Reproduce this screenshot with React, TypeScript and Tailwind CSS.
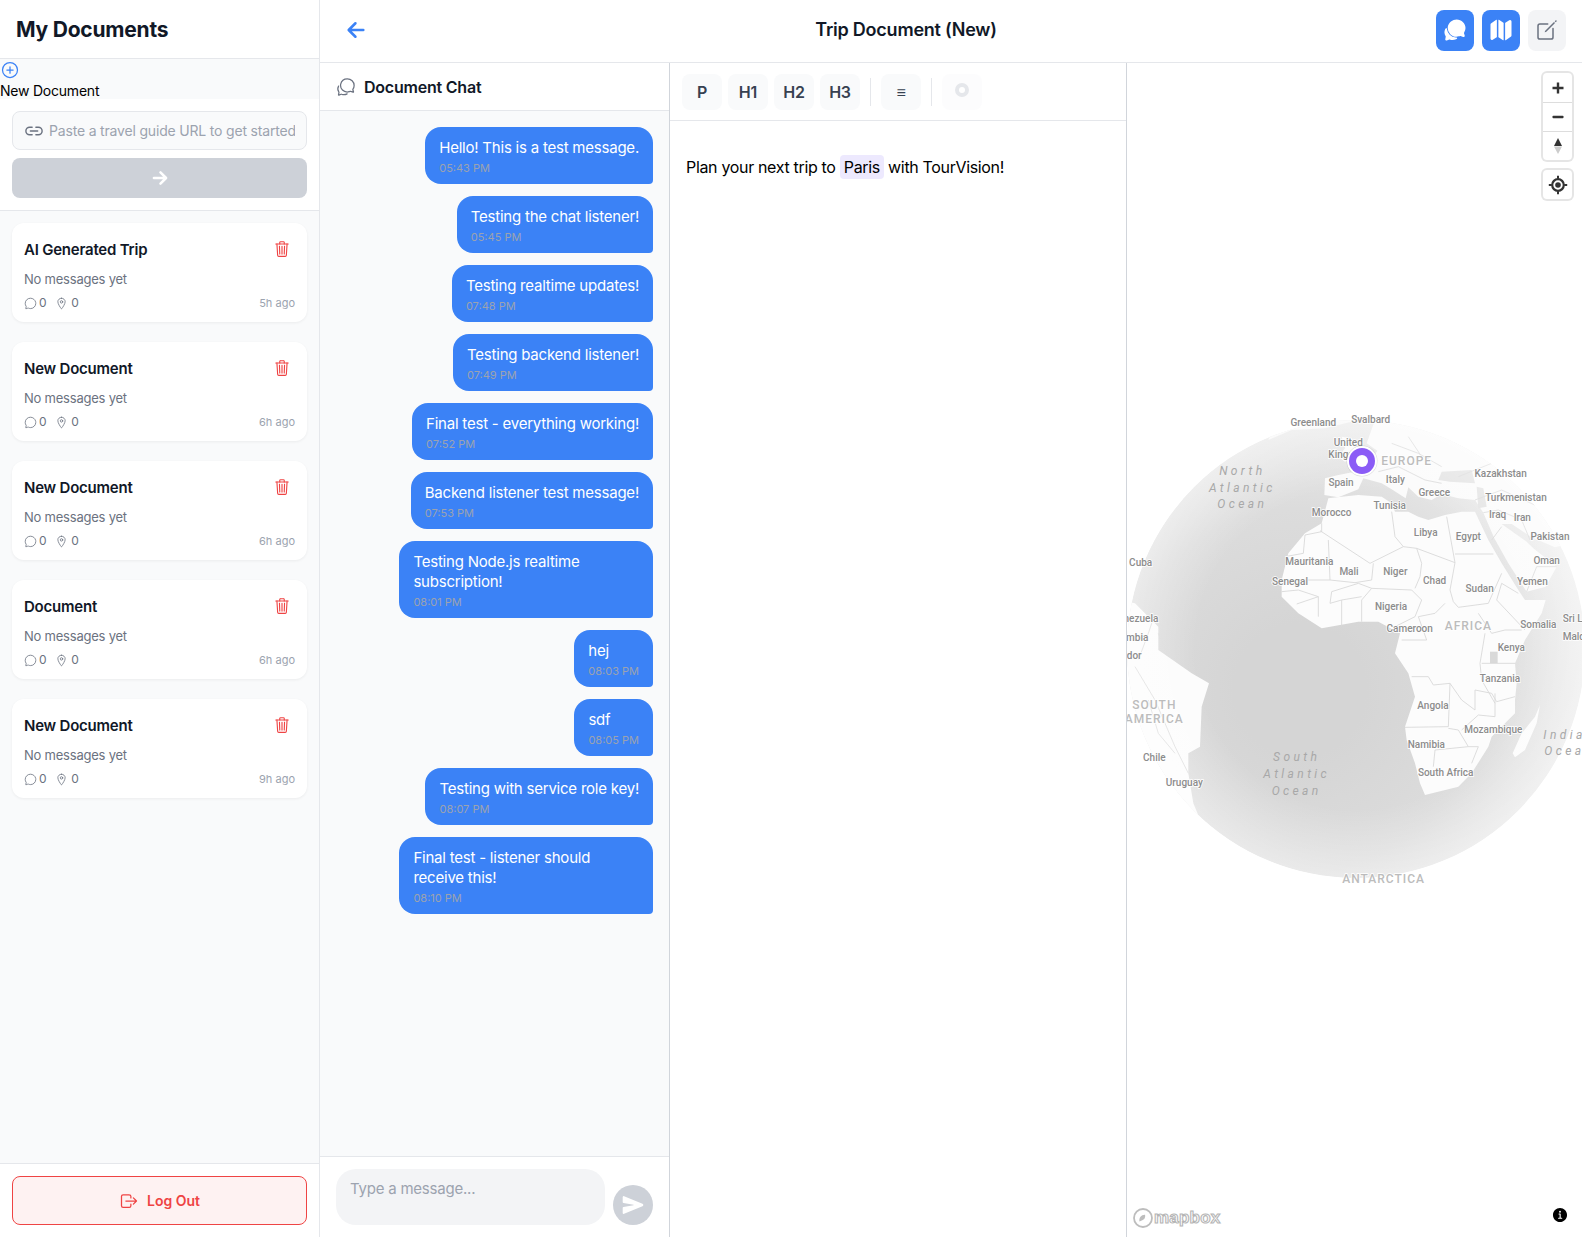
import {
  IoAddCircleOutline,
  IoArrowBack,
  IoArrowForward,
  IoChatbubbleOutline,
  IoChatbubbles,
  IoChatbubblesOutline,
  IoCreateOutline,
  IoInformationCircle,
  IoLinkOutline,
  IoLocationOutline,
  IoLogOutOutline,
  IoMap,
  IoSend,
  IoTrashOutline,
} from 'react-icons/io5';

const DOCS = [
  { title: 'AI Generated Trip', ago: '5h ago' },
  { title: 'New Document', ago: '6h ago' },
  { title: 'New Document', ago: '6h ago' },
  { title: 'Document', ago: '6h ago' },
  { title: 'New Document', ago: '9h ago' },
];

const MESSAGES = [
  { text: 'Hello! This is a test message.', time: '05:43 PM' },
  { text: 'Testing the chat listener!', time: '05:45 PM' },
  { text: 'Testing realtime updates!', time: '07:48 PM' },
  { text: 'Testing backend listener!', time: '07:49 PM' },
  { text: 'Final test - everything working!', time: '07:52 PM' },
  { text: 'Backend listener test message!', time: '07:53 PM' },
  { text: 'Testing Node.js realtime subscription!', time: '08:01 PM' },
  { text: 'hej', time: '08:03 PM' },
  { text: 'sdf', time: '08:05 PM' },
  { text: 'Testing with service role key!', time: '08:07 PM' },
  { text: 'Final test - listener should receive this!', time: '08:10 PM' },
];

// map coords below are in 3x crop units, px/py bring them to the page
const px = (x: number) => 1125 + x / 3;
const py = (y: number) => 400 + y / 3;

const pts = (list: number[][]) => list.map(([x, y]) => `${px(x)},${py(y)}`).join(' ');

const AFRICA = [
  [610, 295], [650, 290], [700, 285], [770, 290], [800, 310], [810, 335], [850, 335], [880, 350], [910, 360], [960, 345],
  [1010, 335], [1050, 335], [1090, 420], [1130, 490], [1180, 570], [1200, 600], [1262, 600], [1250, 640], [1200, 720],
  [1170, 790], [1175, 850], [1170, 900], [1170, 940], [1100, 1010], [1090, 1040], [1040, 1120], [1000, 1160], [900, 1185],
  [885, 1150], [870, 1090], [845, 1020], [840, 980], [870, 890], [850, 820], [810, 760], [825, 700], [760, 665], [700, 665],
  [590, 685], [520, 640], [470, 590], [470, 540], [490, 460], [540, 400], [590, 370],
];

const EURASIA = [
  [600, 235], [598, 285], [640, 292], [700, 268], [715, 235], [770, 250], [800, 268], [842, 295], [850, 262], [880, 290],
  [920, 300], [950, 282], [1000, 295], [1050, 300], [1075, 338], [1108, 415], [1150, 490], [1205, 575], [1262, 560],
  [1295, 500], [1225, 445], [1205, 425], [1130, 372], [1160, 372], [1220, 412], [1290, 442], [1340, 430], [1420, 470],
  [1420, 60], [750, 60], [725, 130], [775, 165], [825, 135], [790, 105], [745, 170], [690, 215], [640, 225],
];

const UK = [[650, 110], [680, 115], [700, 170], [660, 185], [640, 170], [660, 145]];

const SOUTH_AMERICA = [
  [-20, 600], [30, 610], [100, 680], [100, 750], [200, 820], [252, 850], [230, 920], [225, 1040], [190, 1060], [190, 1120],
  [205, 1210], [228, 1265], [100, 1200], [-20, 1000],
];

const MADAGASCAR = [[1245, 915], [1230, 950], [1190, 1000], [1163, 1060], [1170, 1072], [1200, 1050], [1235, 970]];

const BORDERS = [
  [[590, 370], [590, 395], [540, 405], [535, 460], [480, 470]],
  [[585, 392], [735, 490], [835, 440]],
  [[800, 335], [810, 410], [835, 440]],
  [[835, 440], [875, 445], [990, 488]],
  [[965, 350], [990, 488]],
  [[990, 462], [1105, 462]],
  [[610, 420], [615, 540], [480, 540]],
  [[745, 490], [740, 540], [690, 548], [615, 540]],
  [[875, 445], [890, 490], [885, 530], [870, 565]],
  [[740, 565], [860, 570], [890, 600], [870, 650], [810, 680]],
  [[990, 488], [975, 570], [985, 605]],
  [[985, 605], [1000, 622], [1090, 610], [1130, 520]],
  [[1115, 600], [1130, 550], [1180, 580]],
  [[1115, 600], [1200, 690]],
  [[1060, 640], [1100, 700], [1140, 690], [1190, 690]],
  [[620, 575], [700, 550], [740, 565], [710, 600], [710, 665]],
  [[650, 600], [650, 680]],
  [[515, 612], [580, 590], [580, 650]],
  [[470, 575], [520, 570], [580, 590]],
  [[620, 575], [615, 610], [650, 600], [710, 590]],
  [[960, 610], [930, 640], [880, 650], [905, 720], [830, 720]],
  [[1080, 700], [1065, 790], [1070, 840], [1110, 910]],
  [[1070, 790], [1170, 790]],
  [[860, 830], [910, 830], [925, 855], [975, 850], [970, 980], [840, 982]],
  [[970, 985], [1000, 990], [1030, 1040], [1060, 1040]],
  [[930, 1050], [925, 1100]],
  [[930, 1050], [1030, 1040]],
  [[1060, 1040], [1040, 1090]],
  [[1050, 870], [1100, 880], [1115, 905], [1170, 890]],
  [[1110, 880], [1110, 950], [1060, 945], [1010, 990]],
  [[975, 850], [1010, 900], [1050, 930], [1050, 870]],
  [[1100, 420], [1130, 380]],
  [[1075, 338], [1120, 330], [1190, 360], [1215, 420]],
  [[1205, 575], [1235, 500], [1295, 500]],
  [[1050, 300], [1130, 270], [1240, 320], [1340, 390]],
  [[1000, 230], [1100, 190], [1250, 220]],
  [[760, 215], [820, 200], [900, 240], [950, 250]],
  [[800, 130], [880, 160], [950, 200]],
  [[850, 110], [890, 170]],
  [[90, 640], [70, 700], [40, 780]],
  [[100, 700], [125, 760]],
  [[30, 800], [90, 900], [150, 1040], [190, 1120]],
  [[70, 900], [100, 1000], [150, 1060]],
];

const LABELS: { t: string; x: number; y: number; a?: 'start' | 'middle' | 'end' }[] = [
  { t: 'Greenland', x: 565, y: 67 },
  { t: 'Svalbard', x: 737, y: 57 },
  { t: 'United', x: 670, y: 126 },
  { t: 'Kingdom', x: 610, y: 162, a: 'start' },
  { t: 'Kazakhstan', x: 1127, y: 219 },
  { t: 'Spain', x: 648, y: 246 },
  { t: 'Italy', x: 811, y: 237 },
  { t: 'Greece', x: 928, y: 276 },
  { t: 'Turkmenistan', x: 1173, y: 291 },
  { t: 'Morocco', x: 620, y: 336 },
  { t: 'Tunisia', x: 794, y: 317 },
  { t: 'Iraq', x: 1118, y: 342 },
  { t: 'Iran', x: 1192, y: 353 },
  { t: 'Libya', x: 902, y: 398 },
  { t: 'Egypt', x: 1030, y: 408 },
  { t: 'Pakistan', x: 1275, y: 409 },
  { t: 'Oman', x: 1265, y: 481 },
  { t: 'Mauritania', x: 553, y: 485 },
  { t: 'Mali', x: 672, y: 515 },
  { t: 'Niger', x: 811, y: 515 },
  { t: 'Chad', x: 929, y: 542 },
  { t: 'Sudan', x: 1064, y: 565 },
  { t: 'Yemen', x: 1222, y: 544 },
  { t: 'Senegal', x: 495, y: 544 },
  { t: 'Nigeria', x: 798, y: 619 },
  { t: 'Cameroon', x: 854, y: 684 },
  { t: 'Somalia', x: 1240, y: 674 },
  { t: 'Kenya', x: 1159, y: 743 },
  { t: 'Tanzania', x: 1125, y: 835 },
  { t: 'Cuba', x: 47, y: 487 },
  { t: 'Venezuela', x: 100, y: 654, a: 'end' },
  { t: 'Colombia', x: 70, y: 712, a: 'end' },
  { t: 'Ecuador', x: 50, y: 765, a: 'end' },
  { t: 'Sri Lanka', x: 1313, y: 656, a: 'start' },
  { t: 'Maldives', x: 1313, y: 710, a: 'start' },
  { t: 'Angola', x: 924, y: 915 },
  { t: 'Mozambique', x: 1105, y: 989 },
  { t: 'Namibia', x: 904, y: 1033 },
  { t: 'South Africa', x: 962, y: 1117 },
  { t: 'Chile', x: 88, y: 1073 },
  { t: 'Uruguay', x: 178, y: 1148 },
];

const REGIONS = [
  { t: 'EUROPE', x: 845, y: 180 },
  { t: 'AFRICA', x: 1030, y: 675 },
  { t: 'SOUTH', x: 88, y: 912 },
  { t: 'AMERICA', x: 88, y: 955 },
  { t: 'ANTARCTICA', x: 776, y: 1436 },
];

const OCEANS: { t: string; x: number; y: number; a?: 'start' | 'middle' }[] = [
  { t: 'North', x: 352, y: 212 },
  { t: 'Atlantic', x: 352, y: 263 },
  { t: 'Ocean', x: 352, y: 313 },
  { t: 'South', x: 515, y: 1070 },
  { t: 'Atlantic', x: 515, y: 1122 },
  { t: 'Ocean', x: 515, y: 1172 },
  { t: 'Indian', x: 1255, y: 1004, a: 'start' },
  { t: 'Ocean', x: 1258, y: 1054, a: 'start' },
];

function Globe() {
  return (
    <svg viewBox="1127 63 455 1174" className="absolute inset-0 h-full w-full tracking-normal" style={{ fontFamily: 'Roboto, sans-serif' }}>
      <defs>
        <radialGradient id="sea" gradientUnits="userSpaceOnUse" cx="1300" cy="690" r="330">
          <stop offset="0.2" stopColor="#d5d5d5" />
          <stop offset="0.55" stopColor="#dcdcdc" />
          <stop offset="1" stopColor="#f2f2f2" />
        </radialGradient>
        <radialGradient id="rim" gradientUnits="userSpaceOnUse" cx="1356" cy="649" r="229">
          <stop offset="0.7" stopColor="#ffffff" stopOpacity="0" />
          <stop offset="1" stopColor="#ffffff" stopOpacity="0.4" />
        </radialGradient>
        <clipPath id="ball">
          <circle cx="1356" cy="649" r="229" />
        </clipPath>
      </defs>
      <g clipPath="url(#ball)">
        <circle cx="1356" cy="649" r="229" fill="url(#sea)" />
        <polygon points={pts(EURASIA)} fill="#fbfbfb" />
        <polygon points={pts(UK)} fill="#fbfbfb" />
        <polygon points={pts(AFRICA)} fill="#fcfcfc" />
        <polygon points={pts(SOUTH_AMERICA)} fill="#fcfcfc" />
        <polygon points={pts(MADAGASCAR)} fill="#fcfcfc" />
        {/* greenland + iceland slivers */}
        <polygon points={pts([[430, 120], [500, 90], [600, 85], [700, 60], [620, 55], [450, 70]])} fill="#f8f8f8" />
        {/* black sea, caspian, lake */}
        <polygon points={pts([[950, 215], [1040, 210], [1050, 250], [975, 245], [940, 240]])} fill="#e3e3e3" />
        <polygon points={pts([[1055, 260], [1075, 265], [1085, 320], [1060, 325]])} fill="#e3e3e3" />
        <polygon points={pts([[1095, 755], [1118, 755], [1118, 790], [1095, 790]])} fill="#d9d9d9" />
        {BORDERS.map((line, i) => (
          <polyline key={i} points={pts(line)} fill="none" stroke="#d9d9d9" strokeWidth="0.9" />
        ))}
        <circle cx="1356" cy="649" r="229" fill="url(#rim)" />
      </g>
      {OCEANS.map((o, i) => (
        <text key={i} x={px(o.x)} y={py(o.y) + 4} textAnchor={o.a ?? 'middle'} fontSize="12" fontStyle="italic" letterSpacing="3.4" fill="#a8a8a8">
          {o.t}
        </text>
      ))}
      {REGIONS.map((r) => (
        <text key={r.t} x={px(r.x)} y={py(r.y) + 4.5} textAnchor="middle" fontSize="12" fontWeight="500" letterSpacing="1" fill="#bcbcbc" stroke="#fff" strokeWidth="1.5" paintOrder="stroke">
          {r.t}
        </text>
      ))}
      {LABELS.map((l) => (
        <text key={l.t} x={px(l.x)} y={py(l.y) + 3.5} textAnchor={l.a ?? 'middle'} fontSize="10" fontWeight="500" fill="#8c8c8c" stroke="#fff" strokeWidth="1.5" paintOrder="stroke">
          {l.t}
        </text>
      ))}
      {/* marker */}
      <circle cx="1362" cy="461" r="15.5" fill="#000" opacity="0.12" />
      <circle cx="1362" cy="461" r="15" fill="#fff" />
      <circle cx="1362" cy="461" r="13" fill="#8b5cf6" />
      <circle cx="1362" cy="461" r="6" fill="#fff" />
    </svg>
  );
}

function MapControls() {
  return (
    <div className="absolute right-[10px] top-[10px] flex w-[29px] flex-col gap-[10px]">
      <div className="flex flex-col rounded-[4px] bg-white shadow-[0_0_0_2px_rgba(0,0,0,0.1)]">
        <div className="flex h-[29px] items-center justify-center">
          <svg width="14" height="14" viewBox="0 0 14 14"><path d="M5.8 1.5h2.4v4.3h4.3v2.4H8.2v4.3H5.8V8.2H1.5V5.8h4.3z" fill="#333" /></svg>
        </div>
        <div className="flex h-[29px] items-center justify-center border-t border-[#ddd]">
          <svg width="14" height="14" viewBox="0 0 14 14"><rect x="1.5" y="5.8" width="11" height="2.4" rx="0.8" fill="#333" /></svg>
        </div>
        <div className="flex h-[29px] items-center justify-center border-t border-[#ddd]">
          <svg width="10" height="18" viewBox="0 0 10 18"><path d="M5 1 9 9H1z" fill="#333" /><path d="M5 17 1 9.6h8z" fill="#ccc" /></svg>
        </div>
      </div>
      <div className="flex h-[29px] items-center justify-center rounded-[4px] bg-white shadow-[0_0_0_2px_rgba(0,0,0,0.1)]">
        <svg width="20" height="20" viewBox="0 0 20 20" fill="none">
          <circle cx="10" cy="10" r="5.8" stroke="#333" strokeWidth="2.2" />
          <circle cx="10" cy="10" r="2.8" fill="#333" />
          <path d="M10 .8v3M10 16.2v3M.8 10h3M16.2 10h3" stroke="#333" strokeWidth="2" />
        </svg>
      </div>
    </div>
  );
}

function MapboxLogo() {
  return (
    <svg className="absolute bottom-[8px] left-[5px] tracking-normal" width="92" height="22" viewBox="0 0 92 22" style={{ fontFamily: '"Liberation Sans", sans-serif' }}>
      <circle cx="11" cy="11" r="9" fill="#fff" stroke="#bdbdbd" strokeWidth="1.8" />
      <path d="M7.5 14.5c-.8-3.6 1.8-7 5.6-6.8.6 2.8-1 5-2.8 5.6z" fill="#bdbdbd" />
      <text x="22" y="16" fontSize="17" fontWeight="700" letterSpacing="0.2" fill="#fff" stroke="#b5b5b5" strokeWidth="1.1">
        mapbox
      </text>
    </svg>
  );
}

function DocCard({ title, ago }: { title: string; ago: string }) {
  return (
    <div className="flex h-[99px] flex-col rounded-xl bg-white px-3 pt-[15px] shadow-[0_1px_3px_rgba(0,0,0,0.06)]">
      <div className="flex h-[24px] items-center justify-between">
        <span className="text-[15px] font-semibold leading-6 text-[#111827]">{title}</span>
        <IoTrashOutline size={18} className="mr-[4px] -translate-y-px text-[#ef4444]" />
      </div>
      <div className="mt-[7px] text-[13px] leading-[20px] text-[#6b7280]">No messages yet</div>
      <div className="mt-[6px] flex h-[16px] items-center justify-between">
        <div className="flex items-center text-xs text-[#6b7280]">
          <IoChatbubbleOutline size={13} />
          <span className="ml-[2px]">0</span>
          <IoLocationOutline size={13} className="ml-[9px]" />
          <span className="ml-[3px]">0</span>
        </div>
        <span className="text-[11px] tracking-normal text-[#9ca3af]">{ago}</span>
      </div>
    </div>
  );
}

function Sidebar() {
  return (
    <aside className="flex h-full w-[320px] shrink-0 flex-col border-r border-[#e5e7eb] bg-[#f9fafb]">
      <div className="flex h-[59px] shrink-0 items-center border-b border-[#e5e7eb] bg-white px-4 pt-[2px]">
        <h1 className="text-[21px] font-bold text-[#111827]">My Documents</h1>
      </div>
      <div className="flex h-[40px] shrink-0 flex-col items-start pt-[1px]">
        <IoAddCircleOutline size={20} className="shrink-0 text-[#3b82f6]" />
        <span className="shrink-0 text-sm leading-[22px] text-black">New Document</span>
      </div>
      <div className="relative flex h-[112px] shrink-0 flex-col border-b border-[#e5e7eb] bg-white px-3 pt-3">
        <div className="flex h-[39px] items-center rounded-lg border border-[#e5e7eb] bg-[#f9fafb] pl-[11px] pr-[11px]">
          <IoLinkOutline size={20} className="shrink-0 text-[#6b7280]" />
          <input
            readOnly
            placeholder="Paste a travel guide URL to get started"
            className="ml-[5px] min-w-0 flex-1 bg-transparent text-sm tracking-[-0.18px] text-[#111827] outline-none placeholder:text-[#9ca3af]"
          />
        </div>
        <div className="mt-2 flex h-[40px] items-center justify-center rounded-lg bg-[#cdd1d8]">
          <IoArrowForward size={20} className="text-white [&_path]:[stroke-width:64]" />
        </div>
      </div>
      <div className="flex flex-1 flex-col gap-5 p-3">
        {DOCS.map((d, i) => (
          <DocCard key={i} title={d.title} ago={d.ago} />
        ))}
      </div>
      <div className="flex h-[74px] shrink-0 flex-col border-t border-[#e5e7eb] bg-white px-3 pt-3">
        <div className="flex h-[49px] items-center justify-center rounded-lg border border-[#ef4444] bg-[#fef2f2] text-sm font-semibold tracking-normal text-[#ef4444]">
          <IoLogOutOutline size={20} />
          <span className="ml-2">Log Out</span>
        </div>
      </div>
    </aside>
  );
}

function Chat() {
  return (
    <section className="flex h-full w-[350px] shrink-0 flex-col border-r border-[#d1d5db] bg-[#f9fafb]">
      <div className="flex h-[48px] shrink-0 items-center border-b border-[#e5e7eb] bg-white px-4">
        <IoChatbubblesOutline size={20} className="text-[#6b7280]" />
        <span className="ml-2 text-base font-semibold text-[#111827]">Document Chat</span>
      </div>
      <div className="flex flex-1 flex-col items-end gap-3 p-4">
        {MESSAGES.map((m) => (
          <div key={m.time} className="max-w-[80%] rounded-2xl rounded-br-sm bg-[#3b82f6] px-3.5 pb-[9px] pt-[11px]">
            <div className="text-[15px] leading-5 text-white">{m.text}</div>
            <div className="mt-1 text-[11px] leading-[13px] tracking-normal text-[#9ca3af]">{m.time}</div>
          </div>
        ))}
      </div>
      <div className="flex h-[81px] shrink-0 items-end gap-2 border-t border-[#e5e7eb] bg-white px-4 pb-3">
        <textarea
          readOnly
          placeholder="Type a message..."
          className="h-[56px] min-w-0 flex-1 resize-none rounded-[20px] bg-[#f3f4f6] px-3.5 pt-[9px] text-[15px] outline-none placeholder:text-[#9ca3af]"
        />
        <div className="flex h-10 w-10 shrink-0 items-center justify-center rounded-full bg-[#cdd1d8]">
          <IoSend size={22} className="text-white" />
        </div>
      </div>
    </section>
  );
}

const TOOL_BTN = 'flex h-9 w-10 items-center justify-center rounded-lg bg-[#f9fafb] text-base font-semibold text-[#374151]';

function Editor() {
  return (
    <section className="flex h-full w-[457px] shrink-0 flex-col border-r border-[#d1d5db] bg-white">
      <div className="flex h-[58px] shrink-0 items-start gap-1.5 border-b border-[#e5e7eb] pl-3 pt-[11px]">
        <div className={TOOL_BTN}>P</div>
        <div className={TOOL_BTN}>H1</div>
        <div className={TOOL_BTN}>H2</div>
        <div className={TOOL_BTN}>H3</div>
        <div className="mx-1 mt-1 h-7 w-px bg-[#e5e7eb]" />
        <div className={TOOL_BTN}>≡</div>
        <div className="mx-1 mt-1 h-7 w-px bg-[#e5e7eb]" />
        <div className="flex h-9 w-10 items-start justify-center rounded-lg bg-[#f9fafb]/50 pt-[9px]">
          <div className="h-[14px] w-[14px] rounded-full border-[4px] border-[#e5e7eb] bg-white" />
        </div>
      </div>
      <div className="px-4 pt-[35px] text-base leading-[22px] tracking-[-0.33px] text-black">
        Plan your next trip to <span className="rounded bg-[#ede9fe] px-1 py-[2px]">Paris</span> with TourVision!
      </div>
    </section>
  );
}

export default function App() {
  return (
    <div className="flex h-[1237px] w-[1582px] overflow-hidden bg-white tracking-[-0.22px]" style={{ fontFamily: 'Inter, sans-serif' }}>
      <Sidebar />
      <div className="flex h-full min-w-0 flex-1 flex-col">
        <header className="flex h-[63px] shrink-0 items-center justify-between border-b border-[#e5e7eb] bg-white px-4 pb-[2px]">
          <div className="flex w-10 items-center pl-[8px]">
            <IoArrowBack size={24} className="text-[#3b82f6] [&_path]:[stroke-width:54]" />
          </div>
          <h2 className="text-lg font-semibold text-[#111827]">Trip Document (New)</h2>
          <div className="flex gap-2">
            <div className="flex h-[41px] w-[38px] items-center justify-center rounded-lg bg-[#3b82f6]">
              <IoChatbubbles size={24} className="text-white" />
            </div>
            <div className="flex h-[41px] w-[38px] items-center justify-center rounded-lg bg-[#3b82f6]">
              <IoMap size={24} className="text-white" />
            </div>
            <div className="flex h-[41px] w-[38px] items-center justify-center rounded-lg bg-[#f3f4f6]">
              <IoCreateOutline size={24} className="text-[#6b7280]" />
            </div>
          </div>
        </header>
        <div className="flex min-h-0 flex-1">
          <Chat />
          <Editor />
          <div className="relative min-w-0 flex-1 overflow-hidden bg-white">
            <Globe />
            <MapControls />
            <MapboxLogo />
            <IoInformationCircle size={18} className="absolute bottom-[13px] right-[13px] text-black" />
          </div>
        </div>
      </div>
    </div>
  );
}
